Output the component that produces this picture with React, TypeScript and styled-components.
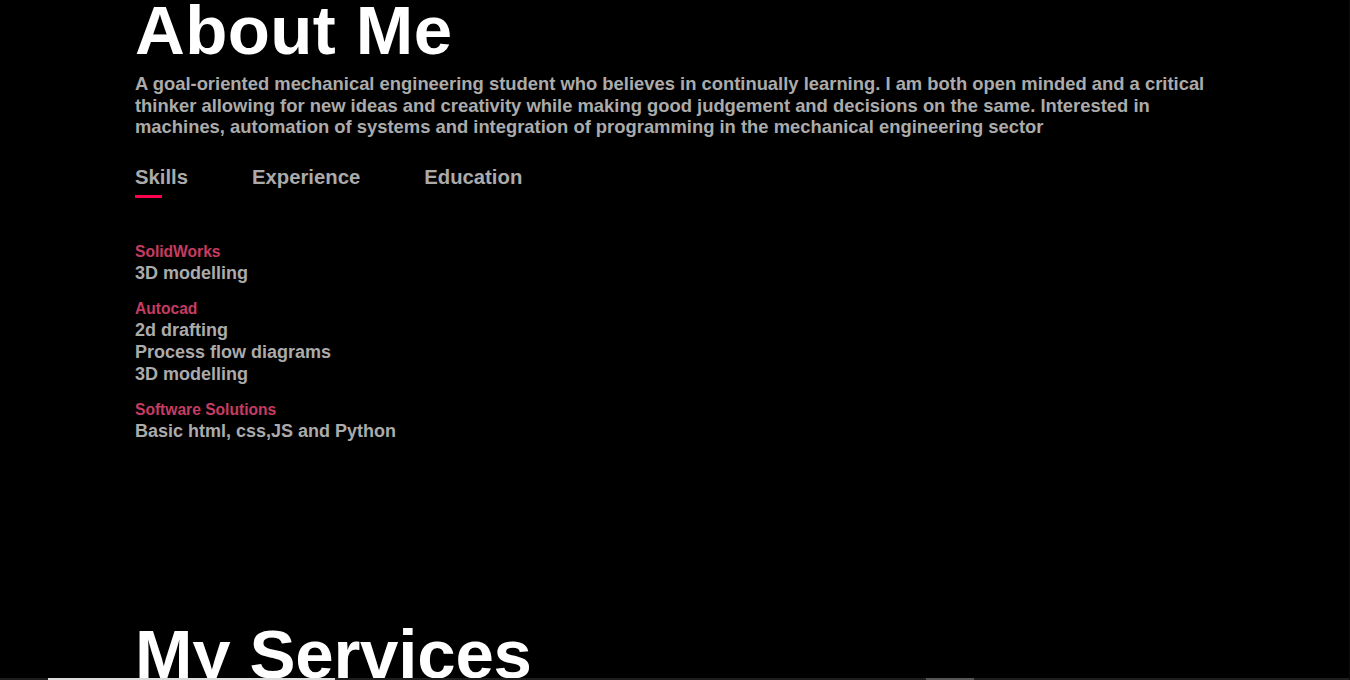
import React, { useState } from "react";
import styled, { createGlobalStyle } from "styled-components";

const Global = createGlobalStyle`
  html, body { margin: 0; padding: 0; background: #000; overflow: hidden; }
  body { font-family: "Liberation Sans", Arial, sans-serif; color: #ababab; }
  * { box-sizing: border-box; }
`;

const Page = styled.div`
  width: 1350px;
  height: 680px;
  background: #000;
  padding: 0 135px;
  position: relative;
  overflow: hidden;
`;

const Section = styled.section`
  display: flex;
  flex-direction: column;
`;

const SubTitle = styled.h1`
  margin: 0;
  font-size: 69px;
  line-height: 62px;
  font-weight: 700;
  color: #fff;
  letter-spacing: 0.4px;
`;

const Intro = styled.p`
  margin: 11px 0 0;
  width: 1085px;
  font-size: 18.4px;
  line-height: 21.6px;
  font-weight: 700;
  color: #ababab;
`;

const TabTitles = styled.div`
  display: flex;
  gap: 64px;
  margin-top: 27px;
`;

const TabLink = styled.div<{ $active?: boolean }>`
  display: flex;
  flex-direction: column;
  gap: 6px;
  font-size: 20.3px;
  line-height: 24px;
  font-weight: 700;
  color: #ababab;
  cursor: pointer;
  &::after {
    content: "";
    display: block;
    height: 3px;
    width: ${(p) => (p.$active ? "50%" : "0")};
    background: #ff004f;
  }
`;

const SkillList = styled.ul`
  list-style: none;
  margin: 43px 0 0;
  padding: 0;
  display: flex;
  flex-direction: column;
  gap: 14px;
`;

const SkillItem = styled.li`
  display: flex;
  flex-direction: column;
`;

const Category = styled.span`
  font-size: 15.6px;
  line-height: 21px;
  font-weight: 700;
  color: #c63c63;
`;

const Detail = styled.span`
  font-size: 18px;
  line-height: 22px;
  font-weight: 700;
  color: #ababab;
`;

const ServicesTitle = styled(SubTitle)`
  margin-top: 182px;
  letter-spacing: -0.2px;
`;

const Strip = styled.div`
  position: fixed;
  left: 0;
  right: 0;
  bottom: 0;
  height: 2px;
  display: flex;
  background: #1e1e1e;
`;

const StripPart = styled.div<{ $w: number; $c: string }>`
  width: ${(p) => p.$w}px;
  flex: none;
  background: ${(p) => p.$c};
`;

const EdgeLine = styled.div`
  position: fixed;
  top: 0;
  right: 0;
  bottom: 0;
  width: 1px;
  background: #0c0c0c;
`;

const skills = [
  { cat: "SolidWorks", items: ["3D modelling"] },
  { cat: "Autocad", items: ["2d drafting", "Process flow diagrams", "3D modelling"] },
  { cat: "Software Solutions", items: ["Basic html, css,JS and Python"] },
];

export default function App() {
  const [tab, setTab] = useState("Skills");
  return (
    <>
      <Global />
      <Page>
        <Section>
          <SubTitle>About Me</SubTitle>
          <Intro>
            A goal-oriented mechanical engineering student who believes in continually learning. I am both
            open minded and a critical thinker allowing for new ideas and creativity while making good
            judgement and decisions on the same. Interested in machines, automation of systems and
            integration of programming in the mechanical engineering sector
          </Intro>
          <TabTitles>
            {["Skills", "Experience", "Education"].map((t) => (
              <TabLink key={t} $active={tab === t} onClick={() => setTab(t)}>
                {t}
              </TabLink>
            ))}
          </TabTitles>
          <SkillList>
            {skills.map((s) => (
              <SkillItem key={s.cat}>
                <Category>{s.cat}</Category>
                {s.items.map((i, k) => (
                  <Detail key={k}>{i}</Detail>
                ))}
              </SkillItem>
            ))}
          </SkillList>
          <ServicesTitle>My Services</ServicesTitle>
        </Section>
        <Strip>
          <StripPart $w={48} $c="#1e1e1e" />
          <StripPart $w={287} $c="#dcdcdc" />
          <StripPart $w={591} $c="#1e1e1e" />
          <StripPart $w={48} $c="#555" />
        </Strip>
        <EdgeLine />
      </Page>
    </>
  );
}
